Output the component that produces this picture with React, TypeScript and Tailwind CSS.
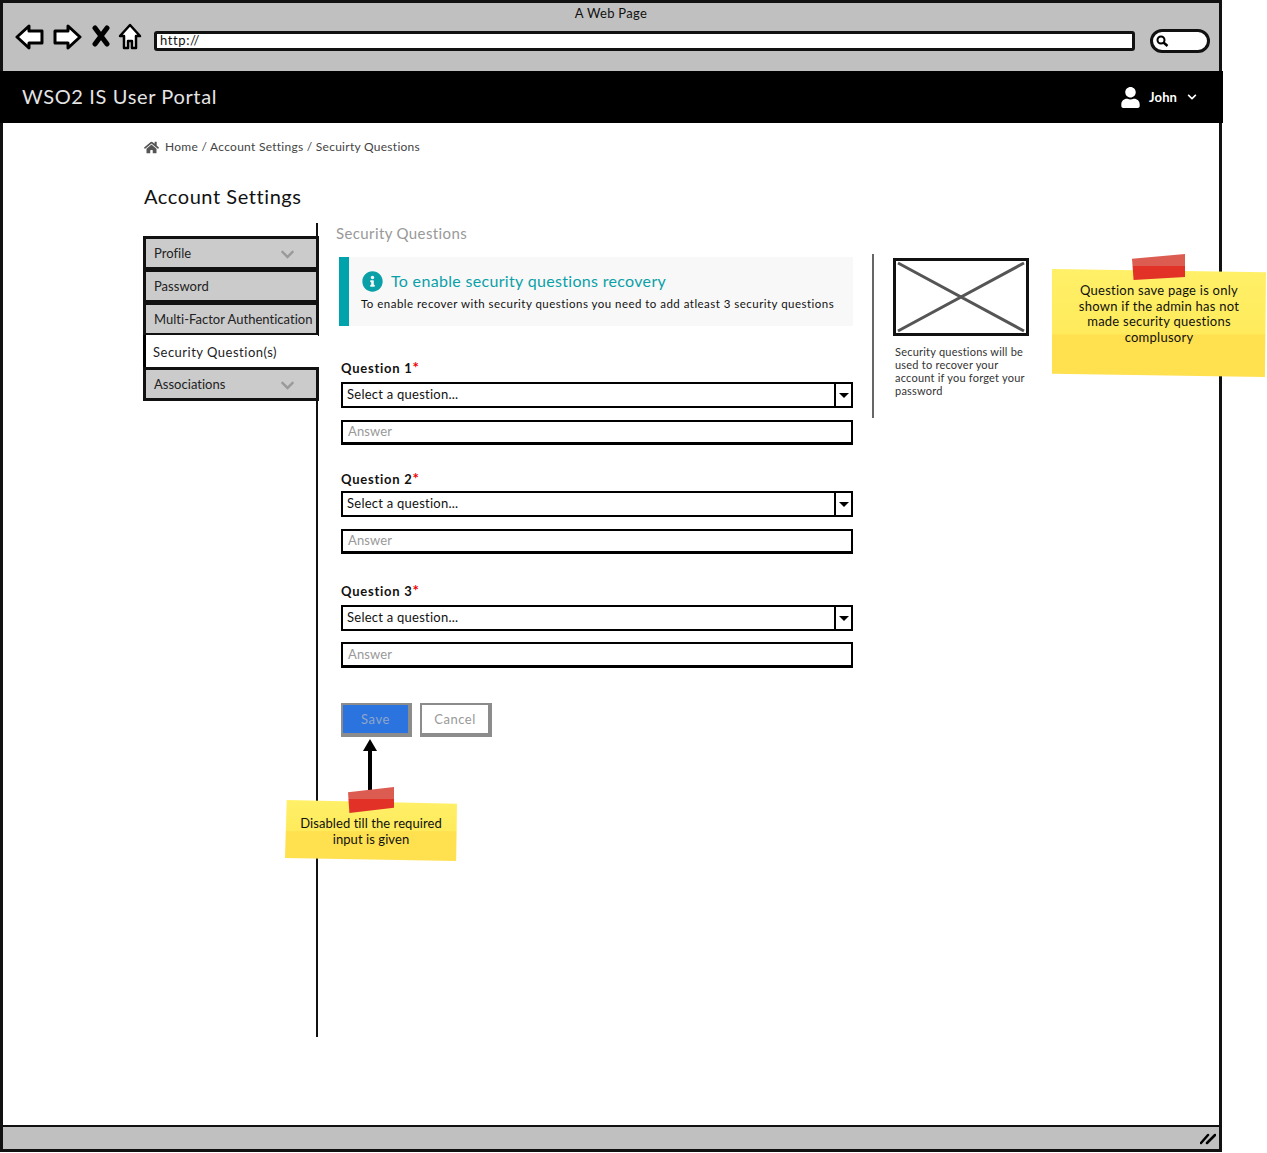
import React from "react";
import { FaHome, FaInfoCircle, FaUser, FaChevronDown } from "react-icons/fa";

const font = "font-['Lato','Noto_Sans',sans-serif]";

const BackIcon = () => (
  <svg width="30" height="28" viewBox="0 0 30 28">
    <path d="M2 14 L14 3 L14 8 L27 8 L27 20 L14 20 L14 25 Z" fill="#fff" stroke="#000" strokeWidth="3" strokeLinejoin="round" />
  </svg>
);

const ForwardIcon = () => (
  <svg width="30" height="28" viewBox="0 0 30 28">
    <path d="M28 14 L16 3 L16 8 L3 8 L3 20 L16 20 L16 25 Z" fill="#fff" stroke="#000" strokeWidth="3" strokeLinejoin="round" />
  </svg>
);

const CloseIcon = () => (
  <svg width="18" height="22" viewBox="0 0 18 22">
    <path d="M3 3 L15 19 M15 3 L3 19" stroke="#000" strokeWidth="5" strokeLinecap="round" />
  </svg>
);

const HomeIcon = () => (
  <svg width="24" height="28" viewBox="0 0 24 28">
    <path d="M12 2 L22 13 L18 13 L18 25 L14 25 L14 18 L10 18 L10 25 L6 25 L6 13 L2 13 Z" fill="#fff" stroke="#000" strokeWidth="2.5" strokeLinejoin="round" />
  </svg>
);

const SearchGlyph = () => (
  <svg width="14" height="14" viewBox="0 0 14 14">
    <circle cx="6" cy="6" r="3.5" fill="none" stroke="#000" strokeWidth="2" />
    <path d="M8.5 8.5 L12.5 12" stroke="#000" strokeWidth="2.5" />
  </svg>
);

const SideItem = ({ label, chevron }: { label: string; chevron?: boolean }) => (
  <div className="h-[34px] w-[176px] -mb-px -ml-px flex items-center justify-between pl-[8px] pt-[2px] pr-[21px] border-[3px] border-[#111] bg-[#cbcbcb] text-[13px] text-[#222] tracking-[0.02px] whitespace-nowrap">
    <span>{label}</span>
    {chevron && <FaChevronDown className="text-[15px] text-[#9a9a9a]" />}
  </div>
);

const QuestionField = ({ n, className, selectClass, answerClass }: { n: number; className: string; selectClass: string; answerClass: string }) => (
  <div className={className}>
    <div className="h-[16px] leading-[16px] text-[13px] font-bold text-[#111] tracking-[0.75px]">
      Question {n}
      <span className="text-[15px] leading-[0] text-[#f00000]">*</span>
    </div>
    <div className={selectClass}>
      <div className="flex-1 pl-[4px] text-[13px] leading-[20px] text-[#111] tracking-[0.25px]">Select a question...</div>
      <div className="w-[17px] border-l-2 border-black flex items-center justify-center">
        <div className="w-0 h-0 border-x-[5px] border-x-transparent border-t-[5px] border-t-black" />
      </div>
    </div>
    <div className={answerClass}>Answer</div>
  </div>
);

const StickyTape = ({ className }: { className: string }) => (
  <div className={`absolute bg-[linear-gradient(#dc5c52_0%,#dc5c52_45%,#e23228_46%,#e23228_100%)] ${className}`} />
);

export default function App() {
  return (
    <div className={`relative w-[1267px] h-[1153px] bg-white overflow-hidden ${font}`}>
      <div className="w-[1222px] h-[1152px] border-[3px] border-[#111] flex flex-col bg-white">
        {/* browser chrome */}
        <div className="h-[68px] shrink-0 bg-[#c0c0c0]">
          <div className="text-center text-[13px] leading-[20px] text-[#111] tracking-[0.3px]">A Web Page</div>
          <div className="flex items-start pl-[12px] pr-[9px]">
            <BackIcon />
            <div className="ml-[7px]"><ForwardIcon /></div>
            <div className="ml-[10px] mt-[2px]"><CloseIcon /></div>
            <div className="ml-[8px]"><HomeIcon /></div>
            <div className="ml-[12px] mt-[8px] w-[982px] h-[20px] border-[3px] border-[#111] rounded-[3px] bg-white flex items-center pl-[3px] text-[13px] text-[#111] tracking-[0.6px]">
              http://
            </div>
            <div className="ml-[15px] mt-[6px] w-[60px] h-[24px] border-[3px] border-[#111] rounded-full bg-white flex items-center pl-[2px]">
              <SearchGlyph />
            </div>
          </div>
        </div>

        {/* header */}
        <div className="h-[52px] shrink-0 -ml-[3px] -mr-[4px] bg-black flex items-center justify-between pl-[22px] pr-[26px]">
          <div className="text-[20px] text-[#e4e4e4] tracking-[0.63px] -mt-[2px]">WSO2 IS User Portal</div>
          <div className="flex items-center text-white">
            <FaUser className="text-[21px]" />
            <span className="ml-[8px] pt-[2px] text-[13px] font-bold tracking-[0.1px]">John</span>
            <FaChevronDown className="ml-[10px] text-[10px]" />
          </div>
        </div>

        {/* page */}
        <div className="flex-1 pl-[141px] pt-[16px] text-[#333]">
          <div className="h-[16px] flex items-center text-[12px] text-[#444] tracking-[0.27px]">
            <FaHome className="text-[15px] text-[#555] mr-[6px]" />
            <span>Home / Account Settings / Secuirty Questions</span>
          </div>
          <div className="mt-[28px] leading-[26px] text-[20px] text-[#111] tracking-[0.57px]">Account Settings</div>

          <div className="mt-[14px] flex items-start">
            <div className="w-[174px] h-[814px] pt-[13px] border-r-2 border-[#111]">
              <SideItem label="Profile" chevron />
              <SideItem label="Password" />
              <SideItem label="Multi-Factor Authentication" />
              <div className="h-[33px] w-[175px] -my-px -ml-px flex items-center pt-[3px] pl-[7px] border-l-[3px] border-black bg-white text-[13px] text-[#222] tracking-[0.5px]">
                Security Question(s)
              </div>
              <SideItem label="Associations" chevron />
            </div>

            <div className="ml-[18px] w-[517px] shrink-0">
              <div className="leading-[20px] text-[15px] text-[#999] tracking-[0.38px]">Security Questions</div>

              <div className="mt-[14px] ml-[3px] w-[514px] h-[69px] flex bg-[#f8f8f8]">
                <div className="w-[10px] bg-[#00a2ab]" />
                <div className="pl-[12px] pt-[12px]">
                  <div className="flex items-center text-[16px] leading-[24px] text-[#0aa0a8] tracking-[0.32px]">
                    <FaInfoCircle className="text-[21px] ml-[1px] mr-[8px]" />
                    To enable security questions recovery
                  </div>
                  <div className="mt-[3px] text-[11.5px] leading-[16px] text-[#111] tracking-[0.47px] whitespace-nowrap">
                    To enable recover with security questions you need to add atleast 3 security questions
                  </div>
                </div>
              </div>

              <div className="ml-[5px] w-[512px]">
                <QuestionField
                  n={1}
                  className="mt-[34px]"
                  selectClass="mt-[6px] h-[26px] flex border-2 border-black bg-white"
                  answerClass="mt-[12px] h-[25px] pl-[5px] border-2 border-b-[3px] border-black text-[13px] leading-[19px] text-[#999] tracking-[0.1px]"
                />
                <QuestionField
                  n={2}
                  className="mt-[26px]"
                  selectClass="mt-[4px] h-[26px] flex border-2 border-black bg-white"
                  answerClass="mt-[12px] h-[25px] pl-[5px] border-2 border-b-[3px] border-black text-[13px] leading-[19px] text-[#999] tracking-[0.1px]"
                />
                <QuestionField
                  n={3}
                  className="mt-[29px]"
                  selectClass="mt-[6px] h-[26px] flex border-2 border-black bg-white"
                  answerClass="mt-[11px] h-[26px] pl-[5px] border-2 border-b-[3px] border-black text-[13px] leading-[20px] text-[#999] tracking-[0.1px]"
                />

                <div className="mt-[35px] flex gap-[8px]">
                  <div className="w-[71px] h-[34px] flex items-center justify-center pt-[2px] border-2 border-[#8c8c8c] border-b-[4px] border-r-[4px] bg-[#2b73df] text-[13px] text-[#8fa6c8] tracking-[0.6px]">
                    Save
                  </div>
                  <div className="w-[72px] h-[34px] flex items-center justify-center pt-[2px] border-2 border-[#8c8c8c] border-b-[4px] border-r-[4px] bg-white text-[13px] text-[#999] tracking-[0.5px]">
                    Cancel
                  </div>
                </div>
              </div>
            </div>

            <div className="ml-[19px] mt-[31px] w-[2px] h-[164px] bg-[#666]" />

            <div className="ml-[19px] mt-[35px] w-[136px]">
              <div className="w-[136px] h-[78px] border-[3px] border-[#111]">
                <svg width="130" height="72" viewBox="0 0 130 72">
                  <path d="M2 2 L128 70 M128 2 L2 70" stroke="#555" strokeWidth="3" />
                </svg>
              </div>
              <div className="mt-[9px] ml-[2px] w-[134px] text-[11px] leading-[13px] text-[#333] tracking-[0.22px]">
                Security questions will be used to recover your account if you forget your password
              </div>
            </div>
          </div>
        </div>

        {/* status bar */}
        <div className="h-[24px] shrink-0 border-t-2 border-[#111] bg-[#c0c0c0] flex items-center justify-end pr-[3px]">
          <svg width="16" height="14" viewBox="0 0 16 14">
            <path d="M1 12 L8 4 M7 12 L15 4" stroke="#000" strokeWidth="2.5" strokeLinecap="round" />
          </svg>
        </div>
      </div>

      {/* note: save page */}
      <div className="absolute left-[1052px] top-[268px] w-[214px] h-[109px] pt-[15px] [clip-path:polygon(0_1%,100%_4%,99.5%_100%,0_97%)] bg-[linear-gradient(#fff068_0%,#ffeb5c_60%,#ffe04f_62%,#ffe04f_100%)] text-center text-[13px] leading-[15.7px] text-[#111] tracking-[0.25px]">
        Question save page is only
        <br />
        shown if the admin has not
        <br />
        made security questions
        <br />
        complusory
      </div>
      <StickyTape className="left-[1132px] top-[254px] w-[53px] h-[26px] [clip-path:polygon(0_18%,100%_0,100%_88%,3%_100%)]" />

      {/* note: disabled save */}
      <div className="absolute left-[370px] top-[739px] -ml-[7px] flex flex-col items-center">
        <div className="w-0 h-0 border-x-[7px] border-x-transparent border-b-[12px] border-b-black" />
        <div className="w-[4px] h-[42px] bg-black" />
      </div>
      <div className="absolute left-[285px] top-[800px] w-[172px] h-[61px] pt-[15px] [clip-path:polygon(1%_0,100%_6%,99.5%_100%,0_95%)] bg-[linear-gradient(#fff068_0%,#ffeb5c_50%,#ffe04f_52%,#ffe04f_100%)] text-center text-[13px] leading-[16px] text-[#111] tracking-[0.07px]">
        Disabled till the required
        <br />
        input is given
      </div>
      <StickyTape className="left-[348px] top-[787px] w-[46px] h-[26px] [clip-path:polygon(0_20%,100%_0,100%_80%,3%_100%)]" />
    </div>
  );
}
